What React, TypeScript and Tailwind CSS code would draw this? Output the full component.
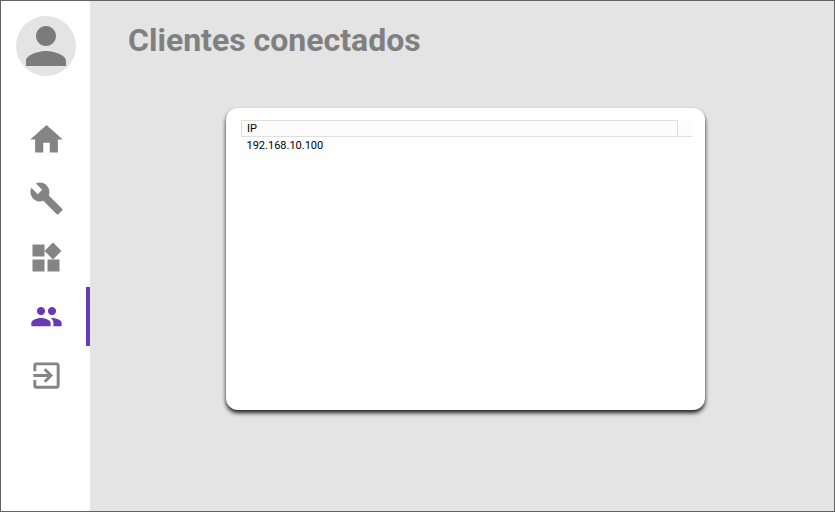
import React from "react";
import {
  MdBuild,
  MdExitToApp,
  MdHome,
  MdPeople,
  MdPerson,
  MdWidgets,
} from "react-icons/md";

const menu = [
  { label: "Inicio", icon: MdHome, size: 39 },
  { label: "Herramientas", icon: MdBuild, size: 35 },
  { label: "Widgets", icon: MdWidgets, size: 36 },
  { label: "Clientes", icon: MdPeople, size: 33, active: true },
  { label: "Salir", icon: MdExitToApp, size: 35 },
];

const clients = [{ ip: "192.168.10.100" }];

const Sidebar = () => {
  return (
    <aside className="w-[89px] shrink-0 bg-white pt-[15px]">
      {/* Avatar */}
      <div className="mx-auto w-15 h-15 rounded-full bg-[#e4e4e4] text-[#7b7b7b]">
        <MdPerson size={60} />
      </div>

      {/* Menu */}
      <nav className="mt-[34px] flex flex-col pl-px">
        {menu.map(({ label, icon: Icon, size, active }) => (
          <button
            key={label}
            type="button"
            aria-label={label}
            aria-current={active ? "page" : undefined}
            className={
              active
                ? "h-[59px] pl-1 flex items-center justify-center border-r-4 border-[#673ab7] text-[#673ab7]"
                : "h-[59px] flex items-center justify-center text-[#848484]"
            }
          >
            <Icon size={size} />
          </button>
        ))}
      </nav>
    </aside>
  );
};

const ClientsTable = () => {
  return (
    <table className="w-full border-collapse text-[11px] leading-[15px] text-black">
      <thead>
        <tr className="bg-[#fcfcfc]">
          <th
            scope="col"
            className="border border-[#dfdfdf] p-0 pl-[5px] text-left font-normal"
          >
            IP
          </th>
          <td className="w-[15px] border-b border-[#dfdfdf] p-0"></td>
        </tr>
      </thead>
      <tbody>
        {clients.map((client) => (
          <tr key={client.ip}>
            <td colSpan={2} className="p-0 pl-[5px] pt-px">
              {client.ip}
            </td>
          </tr>
        ))}
      </tbody>
    </table>
  );
};

const App = () => {
  return (
    <div className="flex min-h-screen border border-[#636363] bg-[#e4e4e4] font-['Roboto',sans-serif]">
      <Sidebar />
      <main className="flex-1 pl-[38px] pr-[31px] pt-[19px]">
        <h1 className="text-[32px] leading-10 font-bold text-[#808080]">
          Clientes conectados
        </h1>
        <section className="mx-auto mt-12 w-full max-w-[479px] min-h-[302px] rounded-xl bg-white pt-3 pl-[15px] pr-[13px] shadow-[0_3px_4px_#1f1f1f]">
          <ClientsTable />
        </section>
      </main>
    </div>
  );
};

export default App;
